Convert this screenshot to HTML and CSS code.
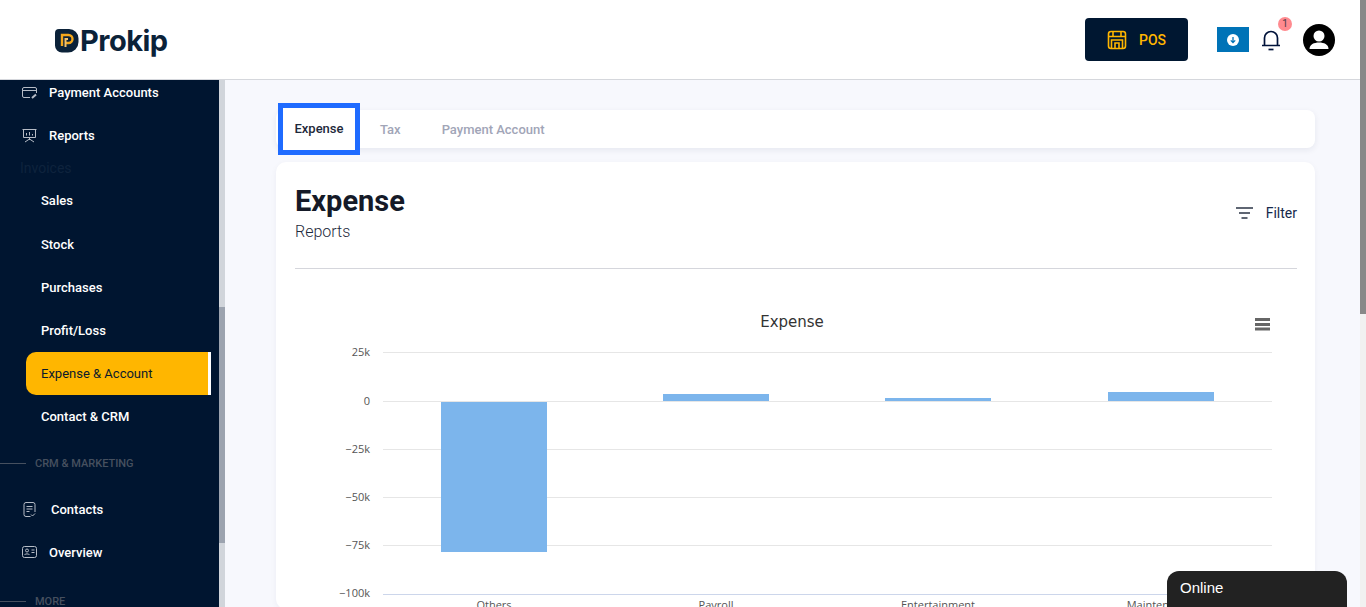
FILE: index.html
```html
<html>
<head>
    <title>Prokip - Expense Reports</title>
    <link rel="stylesheet" href="styles.css">
</head>
<body>
<div class="page">
    <div class="page_inner">
        <div class="topbar">
            <div class="logo">
                <svg class="logo_mark" width="25" height="25" viewBox="0 0 25 25">
                    <path d="M5 1H15A9.5 9.5 0 0 1 24.500 10.500V14A10.500 10.500 0 0 1 14 24.500H8A7 7 0 0 1 1 17.500V5A4 4 0 0 1 5 1Z" fill="#0b2239"/>
                    <path d="M8 18V7H14.500A4 4 0 0 1 14.500 15H11.500" fill="none" stroke="#f5a81c" stroke-width="2.400"/>
                    <path d="M11.500 19V11H14" fill="none" stroke="#f5c26b" stroke-width="2"/>
                </svg>
                <span class="logo_text">Prokip</span>
            </div>
            <div class="topbar_right">
                <div class="pos_btn">
                    <svg width="20" height="20" viewBox="0 0 20 20" fill="none" stroke="#ffb600" stroke-width="1.600">
                        <rect x="1.500" y="1.500" width="17" height="17" rx="2.500"/>
                        <path d="M1.500 6.500H18.500M6 1.500V6.500M14 1.500V6.500M4.500 18.500V10H15.500V18.500M8 18.500V13H12V18.500"/>
                    </svg>
                    <span>POS</span>
                </div>
                <div class="download_btn">
                    <svg width="12" height="12" viewBox="0 0 12 12">
                        <circle cx="6" cy="6" r="6" fill="#fff"/>
                        <path d="M6 3V8.500M3.800 6.400L6 8.600L8.200 6.400" fill="none" stroke="#0073b7" stroke-width="1.300"/>
                    </svg>
                </div>
                <div class="bell">
                    <svg width="20" height="22" viewBox="0 0 20 22" fill="none" stroke="#00123a" stroke-width="1.700">
                        <path d="M1 16.500H19M3.500 16.500V9A6.500 6.500 0 0 1 16.500 9V16.500"/>
                        <path d="M7.500 20.500H12.500"/>
                    </svg>
                    <span class="badge">1</span>
                </div>
                <svg class="avatar" width="32" height="32" viewBox="0 0 32 32">
                    <circle cx="16" cy="16" r="16" fill="#000"/>
                    <circle cx="16" cy="12" r="5.500" fill="#fff"/>
                    <path d="M6.500 25C6.500 20.500 11 18.500 16 18.500S25.500 20.500 25.500 25Z" fill="#fff"/>
                </svg>
            </div>
        </div>

        <div class="layout">
            <div class="sidebar">
                <div class="sidebar_list">
                    <div class="nav_item">
                        <svg class="nav_icon" width="15" height="12" viewBox="0 0 15 12" fill="none" stroke="#b6bcc6" stroke-width="1">
                            <path d="M8 10.500H2A1.500 1.500 0 0 1 .5 9V2A1.500 1.500 0 0 1 2 .5H13A1.500 1.500 0 0 1 14.500 2V6M.5 3.500H14.500"/>
                            <path d="M10 11L14 7.500" stroke-width="2"/>
                        </svg>
                        <span>Payment Accounts</span>
                    </div>
                    <div class="nav_item">
                        <svg class="nav_icon" width="15" height="14" viewBox="0 0 15 14" fill="none" stroke="#b6bcc6" stroke-width="1">
                            <path d="M.5 .5H14.500M1.500 .5V8.500H13.500V.5M7.500 8.500V11M3 13L7.500 10L12 13M4.500 6.500V4M7.500 6.500V3M10.500 6.500V5"/>
                        </svg>
                        <span>Reports</span>
                    </div>
                    <div class="nav_faint">Invoices</div>
                    <div class="nav_sub">Sales</div>
                    <div class="nav_sub">Stock</div>
                    <div class="nav_sub">Purchases</div>
                    <div class="nav_sub">Profit/Loss</div>
                    <div class="nav_sub nav_active">Expense &amp; Account</div>
                    <div class="nav_sub">Contact &amp; CRM</div>
                    <div class="nav_group"><span class="nav_line"></span>CRM &amp; MARKETING</div>
                    <div class="nav_item nav_item_tight">
                        <svg class="nav_icon" width="12" height="15" viewBox="0 0 12 15" fill="none" stroke="#b6bcc6" stroke-width="1">
                            <path d="M7 14.500H2.500A2 2 0 0 1 .5 12.500V2.500A2 2 0 0 1 2.500 .5H9.500A2 2 0 0 1 11.500 2.500V10M3 4.500H9M3 7H9M3 9.500H6M7.500 12.500L9 14L11.500 11.500"/>
                        </svg>
                        <span>Contacts</span>
                    </div>
                    <div class="nav_item">
                        <svg class="nav_icon" width="15" height="12" viewBox="0 0 15 12" fill="none" stroke="#b6bcc6" stroke-width="1">
                            <rect x=".5" y=".5" width="14" height="11" rx="2"/>
                            <circle cx="5" cy="4.500" r="1.500"/>
                            <path d="M2.500 9C2.500 7.500 7.500 7.500 7.500 9M9.500 4H12.500M9.500 6.500H12.500"/>
                        </svg>
                        <span>Overview</span>
                    </div>
                    <div class="nav_group nav_group_more"><span class="nav_line"></span>MORE</div>
                </div>
            </div>
            <div class="side_scroll"><div class="side_thumb"></div></div>

            <div class="content">
                <div class="tabs">
                    <div class="tab tab_active">Expense</div>
                    <div class="tab">Tax</div>
                    <div class="tab">Payment Account</div>
                </div>
                <div class="card">
                    <div class="card_head">
                        <div>
                            <div class="card_title">Expense</div>
                            <div class="card_sub">Reports</div>
                        </div>
                        <div class="filter">
                            <svg width="17" height="12" viewBox="0 0 17 12" fill="none" stroke="#2b3445" stroke-width="1.700">
                                <path d="M0 1H17M3 6H14M5.500 11H11.500"/>
                            </svg>
                            <span>Filter</span>
                        </div>
                    </div>
                    <svg class="chart" width="1033" height="340" viewBox="276 269 1033 340">
                        <text class="chart_title" x="792" y="327" text-anchor="middle">Expense</text>
                        <path d="M1255 319.500H1270M1255 324.500H1270M1255 329H1270" stroke="#666" stroke-width="3"/>

                        <path class="grid" d="M383 352.500H1272M383 401.500H1272M383 449.500H1272M383 497.500H1272M383 545.500H1272"/>
                        <path d="M383 594.500H1272" stroke="#ccd6eb"/>

                        <text class="axis" x="370" y="356" text-anchor="end">25k</text>
                        <text class="axis" x="370" y="405" text-anchor="end">0</text>
                        <text class="axis" x="370" y="453" text-anchor="end">−25k</text>
                        <text class="axis" x="370" y="501" text-anchor="end">−50k</text>
                        <text class="axis" x="370" y="549" text-anchor="end">−75k</text>
                        <text class="axis" x="370" y="597" text-anchor="end">−100k</text>

                        <rect class="bar" x="441" y="402" width="106" height="150"/>
                        <rect class="bar" x="663" y="394" width="106" height="7"/>
                        <rect class="bar" x="885" y="398" width="106" height="3"/>
                        <rect class="bar" x="1108" y="392" width="106" height="9"/>

                        <text class="axis" x="494" y="609" text-anchor="middle">Others</text>
                        <text class="axis" x="716" y="609" text-anchor="middle">Payroll</text>
                        <text class="axis" x="938" y="609" text-anchor="middle">Entertainment</text>
                        <text class="axis" x="1160" y="609" text-anchor="middle">Maintenance</text>
                    </svg>
                </div>
            </div>
        </div>
    </div>
    <div class="page_scroll"><div class="page_thumb"></div></div>
</div>
<div class="chat">Online</div>
</body>
</html>
```

FILE: styles.css
```css
html, body {
    margin: 0;
    padding: 0;
    height: 100%;
    overflow: hidden;
}

body {
    font-family: Roboto, sans-serif;
    background-color: #f7f8fd;
}

.page {
    display: flex;
    height: 100%;
}

.page_inner {
    flex: 1;
    min-width: 0;
    display: flex;
    flex-direction: column;
}

.page_scroll {
    width: 6px;
    background-color: #f1f1f1;
}

.page_thumb {
    height: 314px;
    background-color: #888;
}

/* top bar */
.topbar {
    height: 79px;
    flex: none;
    display: flex;
    align-items: center;
    justify-content: space-between;
    background-color: #fff;
    border-bottom: 1px solid #d5d7dc;
}

.logo {
    display: flex;
    align-items: center;
    margin-left: 54px;
    margin-top: 2px;
}

.logo_text {
    font-family: Inter, sans-serif;
    font-weight: 700;
    font-size: 29px;
    letter-spacing: -0.5px;
    color: #0b2239;
    margin-left: 1px;
}

.topbar_right {
    display: flex;
    align-items: center;
    margin-right: 25px;
}

.pos_btn {
    width: 103px;
    height: 43px;
    box-sizing: border-box;
    padding-left: 22px;
    display: flex;
    align-items: center;
    gap: 12px;
    background-color: #001731;
    border-radius: 4px;
    color: #ffb600;
    font-size: 14px;
    font-weight: 500;
}

.download_btn {
    width: 32px;
    height: 25px;
    margin-left: 29px;
    display: flex;
    align-items: center;
    justify-content: center;
    background-color: #0073b7;
}

.bell {
    position: relative;
    width: 20px;
    height: 22px;
    margin-left: 12px;
}

.badge {
    position: absolute;
    top: -12px;
    left: 17px;
    width: 14px;
    height: 14px;
    border-radius: 50%;
    background-color: #ff8a8f;
    color: #4a3a48;
    font-size: 10px;
    line-height: 14px;
    text-align: center;
}

.avatar {
    margin-left: 22px;
}

/* sidebar */
.layout {
    flex: 1;
    min-height: 0;
    display: flex;
}

.sidebar {
    width: 219px;
    flex: none;
    overflow: hidden;
    background-color: #001530;
}

.sidebar_list {
    margin-top: -9px;
}

.nav_item {
    height: 43.200px;
    display: flex;
    align-items: center;
    padding-left: 22px;
    gap: 12px;
    color: #fff;
    font-size: 13px;
    font-weight: 500;
}

.nav_item_tight {
    gap: 14px;
}

.nav_icon {
    flex: none;
    width: 15px;
}

.nav_faint {
    height: 22px;
    line-height: 22px;
    padding-left: 20px;
    color: #0e233d;
    font-size: 14px;
}

.nav_sub {
    height: 43.200px;
    line-height: 43.200px;
    margin-left: 26px;
    width: 185px;
    box-sizing: border-box;
    padding-left: 15px;
    color: #fff;
    font-size: 13px;
    font-weight: 500;
}

.nav_active {
    background-color: #ffb600;
    color: #0b1a2c;
    font-weight: 400;
    border-right: 3px solid #fff;
    border-radius: 10px 0 0 10px;
}

.nav_group {
    height: 49px;
    display: flex;
    align-items: center;
    color: #46505f;
    font-size: 11px;
    font-weight: 500;
}

.nav_group_more {
    margin-top: 3px;
}

.nav_line {
    width: 26px;
    height: 1px;
    margin-right: 9px;
    background-color: #46505f;
}

.side_scroll {
    width: 6px;
    flex: none;
    background-color: #d1d5db;
}

.side_thumb {
    height: 236px;
    margin-top: 227px;
    background-color: #9ca3af;
}

/* content */
.content {
    flex: 1;
    min-width: 0;
    padding: 30px 45px 0 51px;
}

.tabs {
    height: 38px;
    display: flex;
    align-items: center;
    background-color: #fff;
    border-radius: 8px;
    box-shadow: 0 2px 6px rgba(30, 40, 80, 0.08);
}

.tab {
    padding: 0 21px 0 20px;
    color: #a1a5b7;
    font-size: 13px;
    font-weight: 500;
}

.tab_active {
    box-sizing: border-box;
    width: 82px;
    height: 52px;
    margin-left: 2px;
    padding: 0;
    line-height: 42px;
    text-align: center;
    color: #1e293b;
    background-color: #fff;
    border: 5px solid #1f6bff;
}

.card {
    margin-top: 14px;
    padding: 0 18px 0 19px;
    background-color: #fff;
    border-radius: 10px;
    box-shadow: 0 2px 6px rgba(30, 40, 80, 0.05);
    position: relative;
}

.card_head {
    height: 106px;
    display: flex;
    align-items: center;
    justify-content: space-between;
    border-bottom: 1px solid #d5d6dc;
}

.card_title {
    font-size: 29px;
    font-weight: 700;
    line-height: 34px;
    color: #151a28;
}

.card_sub {
    font-size: 16px;
    font-weight: 300;
    line-height: 28px;
    color: #1e2a3c;
}

.filter {
    display: flex;
    align-items: center;
    gap: 13px;
    font-size: 14px;
    color: #14284b;
    margin-bottom: 4px;
}

.chart {
    display: block;
    margin-left: -19px;
}

.chart_title {
    font-family: "DejaVu Sans", sans-serif;
    font-size: 15px;
    fill: #333;
}

.axis {
    font-family: "Open Sans", sans-serif;
    font-size: 11px;
    fill: #555;
}

.grid {
    stroke: #e6e6e6;
    fill: none;
}

.bar {
    fill: #7cb5ec;
}

/* chat widget */
.chat {
    position: fixed;
    left: 1167px;
    bottom: 0;
    width: 180px;
    height: 36px;
    box-sizing: border-box;
    padding: 8px 13px;
    background-color: #222;
    border-radius: 12px 12px 0 0;
    color: #fff;
    font-family: "Liberation Sans", sans-serif;
    font-size: 15px;
}
```
